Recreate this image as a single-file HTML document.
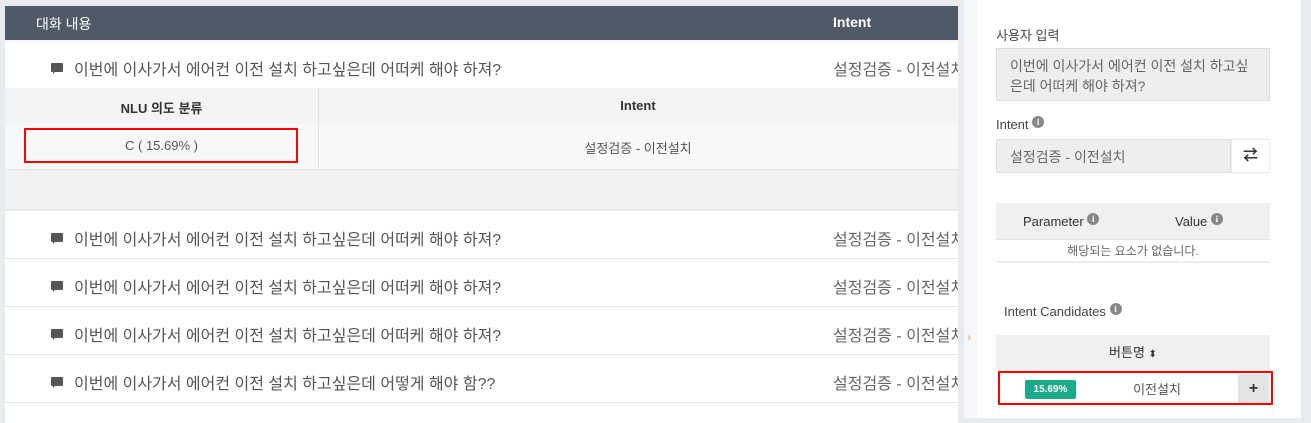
<!DOCTYPE html>
<html><head><meta charset="utf-8"><style>
*{margin:0;padding:0;box-sizing:border-box}
body{width:1311px;height:418px;overflow:hidden;background:#e9ecef;font-family:"Liberation Sans","Noto Sans CJK KR",sans-serif;position:relative;color:#555}
.a{position:absolute}
.row{position:absolute;left:5px;width:953px;background:#fff;border-bottom:1px solid #e6e6e6;overflow:hidden}
.row .t{position:absolute;left:69px;font-size:16px;color:#555;white-space:nowrap}
.row .i{position:absolute;left:828px;font-size:16px;color:#666;white-space:nowrap;width:125px;overflow:hidden}
.ic{position:absolute;left:46px;width:12px;height:9px;background:#555;border-radius:1px}
.ic:after{content:"";position:absolute;left:2px;top:8px;border-left:3px solid #555;border-bottom:3px solid transparent}
.info{display:inline-block;width:12px;height:12px;border-radius:50%;background:#888;color:#fff;font-size:9px;font-weight:bold;text-align:center;line-height:12px;vertical-align:4px;font-family:"Liberation Serif",serif}
</style></head><body>
<div class="a" style="left:5px;top:6px;width:953px;height:34px;background:#4f5a66;color:#fff;font-size:14px">
<span class="a" style="left:31px;top:8px">대화 내용</span><span class="a" style="left:828px;top:8px;font-weight:bold">Intent</span></div>
<div class="row" style="top:40px;height:48px;border:0;box-shadow:inset 0 2px 2px rgba(0,0,0,0.04)"><span class="ic" style="top:23px"></span><span class="t" style="top:16px">이번에 이사가서 에어컨 이전 설치 하고싶은데 어떠케 해야 하져?</span><span class="i" style="top:16px">설정검증 - 이전설치</span></div>
<div class="a" style="left:5px;top:88px;width:953px;height:36px;background:#f4f4f4;font-size:13px;font-weight:bold;color:#333">
<span class="a" style="left:0;width:313px;text-align:center;top:10px">NLU 의도 분류</span>
<span class="a" style="left:313px;width:640px;text-align:center;top:10px">Intent</span></div>
<div class="a" style="left:5px;top:124px;width:953px;height:46px;background:#f8f8f8;border-bottom:1px solid #e3e3e3;font-size:13px;color:#555">
<span class="a" style="left:0;width:313px;text-align:center;top:14px">C ( 15.69% )</span>
<span class="a" style="left:313px;width:640px;text-align:center;top:14px">설정검증 - 이전설치</span></div>
<div class="a" style="left:318px;top:88px;width:1px;height:81px;background:#e3e3e3"></div>
<div class="a" style="left:24px;top:128px;width:274px;height:35px;border:2px solid #f00"></div>
<div class="a" style="left:5px;top:170px;width:953px;height:40px;background:#f2f2f2;border-bottom:1px solid #e6e6e6"></div>
<div class="row" style="top:211px;height:48px"><span class="ic" style="top:22px"></span><span class="t" style="top:15px">이번에 이사가서 에어컨 이전 설치 하고싶은데 어떠케 해야 하져?</span><span class="i" style="top:15px">설정검증 - 이전설치</span></div>
<div class="row" style="top:259px;height:48px"><span class="ic" style="top:22px"></span><span class="t" style="top:15px">이번에 이사가서 에어컨 이전 설치 하고싶은데 어떠케 해야 하져?</span><span class="i" style="top:15px">설정검증 - 이전설치</span></div>
<div class="row" style="top:307px;height:48px"><span class="ic" style="top:22px"></span><span class="t" style="top:15px">이번에 이사가서 에어컨 이전 설치 하고싶은데 어떠케 해야 하져?</span><span class="i" style="top:15px">설정검증 - 이전설치</span></div>
<div class="row" style="top:355px;height:48px"><span class="ic" style="top:22px"></span><span class="t" style="top:15px">이번에 이사가서 에어컨 이전 설치 하고싶은데 어떻게 해야 함??</span><span class="i" style="top:15px">설정검증 - 이전설치</span></div>
<div class="row" style="top:403px;height:20px;border:0"></div>
<div class="a" style="left:964px;top:0;width:13px;height:418px;background:#f6f7f8"></div>
<div class="a" style="left:967px;top:330px;color:#f5a040;font-size:12px">›</div>
<div class="a" style="left:977px;top:0;width:324px;height:418px;background:#fff"></div>
<div class="a" style="left:996px;top:25px;font-size:13px;color:#444">사용자 입력</div>
<div class="a" style="left:996px;top:48px;width:274px;height:53px;background:#eee;border:1px solid #ddd;font-size:14px;color:#666;padding:7px 13px;line-height:20px">이번에 이사가서 에어컨 이전 설치 하고싶은데 어떠케 해야 하져?</div>
<div class="a" style="left:996px;top:116px;font-size:13px;color:#444">Intent <span class="info">i</span></div>
<div class="a" style="left:996px;top:139px;width:235px;height:34px;background:#eee;border:1px solid #ddd;font-size:14px;color:#666;padding:7px 13px">설정검증 - 이전설치</div>
<div class="a" style="left:1231px;top:139px;width:39px;height:34px;border:1px solid #eee;text-align:center;font-size:15px;font-weight:bold;color:#333;line-height:32px">⇄</div>
<div class="a" style="left:996px;top:203px;width:274px;height:37px;background:#eef0f2;border-bottom:1px solid #e3e3e3;font-size:13px;color:#333">
<span class="a" style="left:27px;top:10px">Parameter <span class="info">i</span></span><span class="a" style="left:179px;top:10px">Value <span class="info">i</span></span></div>
<div class="a" style="left:996px;top:240px;width:274px;height:23px;border-bottom:2px solid #eee;font-size:12px;color:#666;text-align:center;line-height:22px">해당되는 요소가 없습니다.</div>
<div class="a" style="left:1004px;top:303px;font-size:13px;color:#444">Intent Candidates <span class="info">i</span></div>
<div class="a" style="left:996px;top:335px;width:274px;height:36px;background:#eef0f2;font-size:13px;color:#333;text-align:center;line-height:36px">버튼명 <span style="font-size:10px">⬍</span></div>
<div class="a" style="left:998px;top:371px;width:275px;height:34px;border:2px solid #f00"></div>
<div class="a" style="left:1025px;top:380px;width:51px;height:19px;background:#1aaa88;color:#fff;font-size:10px;font-weight:bold;text-align:center;line-height:19px;border-radius:2px">15.69%</div>
<div class="a" style="left:1076px;top:380px;width:162px;font-size:13px;color:#555;text-align:center;line-height:19px">이전설치</div>
<div class="a" style="left:1238px;top:374px;width:31px;height:29px;background:#e3e3e3;text-align:center;line-height:29px;font-size:16px;font-weight:bold;color:#333">+</div>
</body></html>
